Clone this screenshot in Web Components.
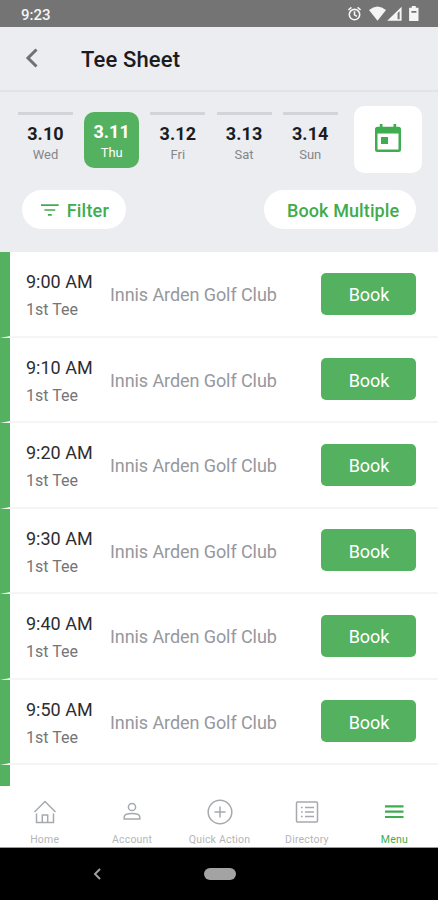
<!DOCTYPE html>
<html lang="en">
<head>
<meta charset="utf-8">
<meta name="viewport" content="width=device-width, initial-scale=1">
<title>Tee Sheet</title>
<style>
  body {
    margin: 0;
    font-family: Roboto, "Liberation Sans", sans-serif;
    --green: #54b15f;
    --green-text: #3fac4f;
    --panel: #ecedf1;
  }
</style>
</head>
<body>
<tee-app></tee-app>

<script>
const define = (name, render) => {
  customElements.define(name, class extends HTMLElement {
    constructor() {
      super();
      this.attachShadow({ mode: 'open' });
    }

    connectedCallback() {
      this.shadowRoot.innerHTML = render(this);
    }
  });
};

define('status-bar', () => `
  <style>
    :host {
      display: flex;
      align-items: center;
      height: 27px;
      box-sizing: border-box;
      padding: 2px 18px 0 21px;
      background: #747474;
      color: #f5f5f5;
      font-size: 15px;
      font-weight: 500;
    }
    svg { margin-left: auto; }
  </style>
  <span>9:23</span>
  <svg width="74" height="18" viewBox="346 6 74 18" fill="#f5f5f5">
    <g fill="none" stroke="#f5f5f5" stroke-width="1.600">
      <circle cx="354.5" cy="14.6" r="5.2"/>
      <path d="M354.5 11.3v3.6l2.4 1.5M348.4 10l3-2.6M357.6 7.4l3 2.6"/>
    </g>
    <path d="M369 10q8.500-7 17 0l-8.500 10.800z"/>
    <path fill-rule="evenodd" d="M387.200 20.800L401.600 6.800V20.800zM397.600 13v6.300h2V11.200z"/>
    <path fill-rule="evenodd" d="M411.800 6h4v1.700h2.700v13.200h-9.400V7.700h2.700zM411.400 11v1.800h5V11z"/>
  </svg>
`);

define('app-header', () => `
  <style>
    :host {
      display: flex;
      align-items: center;
      height: 65px;
      box-sizing: border-box;
      padding-left: 25px;
      background: var(--panel);
      border-bottom: 2px solid #e2e3e6;
    }
    svg { margin-top: -2px; }
    h1 {
      margin: 2px 0 0 42px;
      font-size: 22px;
      font-weight: 500;
      line-height: 26px;
      letter-spacing: .15px;
      color: #1c1c1e;
    }
  </style>
  <svg width="14" height="20" viewBox="0 0 14 20" fill="none" stroke="#707173" stroke-width="3">
    <path d="M11.500 1.500L3 10l8.500 8.500"/>
  </svg>
  <h1><slot></slot></h1>
`);

define('day-tab', el => `
  <style>
    :host {
      display: block;
      width: 55px;
      height: 56px;
      box-sizing: border-box;
      border-top: 3px solid #d2d4da;
      padding-top: 8px;
      text-align: center;
      color: #1b1c1e;
    }
    :host([selected]) {
      border-top: 0;
      border-radius: 10px;
      padding-top: 9px;
      background: var(--green);
      color: #fff;
    }
    b {
      display: block;
      font-size: 18px;
      font-weight: 700;
      line-height: 21px;
      letter-spacing: .1px;
    }
    span {
      display: block;
      font-size: 13px;
      line-height: 15px;
      margin-top: 3px;
      color: #858689;
    }
    :host([selected]) span { color: #fff; }
  </style>
  <b>${el.getAttribute('date')}</b>
  <span>${el.getAttribute('day')}</span>
`);

define('calendar-button', () => `
  <style>
    :host {
      display: flex;
      align-items: center;
      justify-content: center;
      width: 68px;
      height: 67px;
      border-radius: 10px;
      background: #fff;
    }
    svg { margin-top: -3px; }
  </style>
  <svg width="26" height="28" viewBox="0 0 26 28" fill="#3fac4f">
    <path fill-rule="evenodd" d="M4.800 0h2.700v2.700h11V0h2.700v2.700h2.300a2.500 2.500 0 0 1 2.500 2.500V25.500a2.500 2.500 0 0 1-2.500 2.500H2.500A2.500 2.500 0 0 1 0 25.500V5.200a2.500 2.500 0 0 1 2.500-2.500h2.300zM2.500 9.500v16h21v-16z"/>
    <rect x="6" y="13" width="7" height="7"/>
  </svg>
`);

define('pill-button', () => `
  <style>
    :host {
      display: flex;
      align-items: center;
      height: 39px;
      box-sizing: border-box;
      padding: 2px 17px 0 19px;
      border-radius: 20px;
      background: #fff;
      color: var(--green-text);
      font-size: 18px;
      font-weight: 500;
      white-space: nowrap;
    }
  </style>
  <slot name="icon"></slot>
  <slot></slot>
`);

define('date-panel', () => `
  <style>
    :host {
      display: block;
      height: 160px;
      box-sizing: border-box;
      padding: 14px 16px 0 18px;
      background: var(--panel);
    }
    .days {
      display: flex;
      align-items: flex-start;
      gap: 11.200px;
    }
    day-tab { margin-top: 6px; }
    calendar-button { margin-left: auto; }
    .actions {
      display: flex;
      justify-content: space-between;
      margin-top: 17px;
      padding: 0 6px 0 4px;
    }
    .filter { width: 104px; letter-spacing: .2px; }
    .filter svg { margin: -2px 8px 0 0; }
    .multiple { width: 152px; padding-left: 23px; letter-spacing: .1px; }
  </style>
  <div class="days">
    <day-tab date="3.10" day="Wed"></day-tab>
    <day-tab date="3.11" day="Thu" selected></day-tab>
    <day-tab date="3.12" day="Fri"></day-tab>
    <day-tab date="3.13" day="Sat"></day-tab>
    <day-tab date="3.14" day="Sun"></day-tab>
    <calendar-button></calendar-button>
  </div>
  <div class="actions">
    <pill-button class="filter">
      <svg slot="icon" width="18" height="12" viewBox="0 0 18 12" stroke="#3fac4f" stroke-width="1.700">
        <path d="M0 1h18M3.500 6h11M7 11h4"/>
      </svg>Filter</pill-button>
    <pill-button class="multiple">Book Multiple</pill-button>
  </div>
`);

define('tee-time', el => `
  <style>
    :host {
      display: flex;
      flex: none;
      align-items: center;
      height: 85.500px;
      box-sizing: border-box;
      padding: 0 22px 0 16px;
      border-left: 10px solid var(--green);
      border-bottom: 2px solid #f5f5f6;
      background: #fff;
    }
    .when { width: 84px; padding-top: 4px; white-space: nowrap; }
    .time {
      font-size: 18px;
      line-height: 22px;
      color: #2d2d30;
    }
    .tee {
      margin-top: 7px;
      font-size: 16px;
      line-height: 20px;
      color: #747578;
    }
    .club {
      flex: 1;
      padding-top: 2px;
      font-size: 18px;
      letter-spacing: -.08px;
      color: #96989d;
      white-space: nowrap;
    }
    button {
      width: 95px;
      height: 42px;
      padding: 2px 0 0 1px;
      border: 0;
      border-radius: 5px;
      background: var(--green);
      color: #fff;
      font: 400 18px Roboto, "Liberation Sans", sans-serif;
      letter-spacing: -.1px;
    }
  </style>
  <div class="when">
    <div class="time">${el.getAttribute('time')}</div>
    <div class="tee">1st Tee</div>
  </div>
  <div class="club"><slot></slot></div>
  <button>Book</button>
`);

define('tee-list', () => {
  const times = ['9:00 AM', '9:10 AM', '9:20 AM', '9:30 AM', '9:40 AM', '9:50 AM'];
  return `
  <style>
    :host {
      display: flex;
      flex-direction: column;
      height: 534px;
      overflow: hidden;
    }
    /* top of the next row, cut off by the tab bar */
    .rest { flex: 1; border-left: 10px solid var(--green); background: #fff; }
  </style>
  ${times.map(t => `<tee-time time="${t}">Innis Arden Golf Club</tee-time>`).join('')}
  <div class="rest"></div>`;
});

const icons = {
  home: '<path d="M3.500 14L14 3.500 24.500 14M5.500 15.500v9h17v-9M11.300 24v-7h5.400v7"/>',
  account: '<circle cx="14" cy="9" r="3.600"/><path d="M6.200 21v-2c0-2.300 4-3.500 7.800-3.500s7.800 1.200 7.800 3.500v2z"/>',
  plus: '<circle cx="14" cy="14" r="11.800"/><path d="M14 8.500v11M8.500 14h11"/>',
  directory: '<rect x="3.500" y="4" width="21" height="20" rx="1"/><path d="M8 9.500h1.700M12 9.500h9M8 14h1.700M12 14h9M8 18.500h1.700M12 18.500h9"/>',
  menu: '<path stroke-width="2.200" d="M5 8.400h18.500M5 13.700h18.500M5 19h18.500"/>'
};

define('tab-item', el => `
  <style>
    :host {
      display: flex;
      flex: 1;
      flex-direction: column;
      align-items: center;
      color: #a6a9ae;
      font-size: 10.500px;
      line-height: 12px;
      letter-spacing: .2px;
      white-space: nowrap;
    }
    :host([active]) { color: var(--green-text); }
    svg { display: block; margin-bottom: 8px; }
    span { color: #b4b6ba; }
    :host([active]) span { color: inherit; }
  </style>
  <svg width="28" height="28" viewBox="0 0 28 28" fill="none" stroke="currentColor" stroke-width="1.500">${icons[el.getAttribute('icon')]}</svg>
  <span><slot></slot></span>
`);

define('tab-bar', () => `
  <style>
    :host {
      display: flex;
      height: 62px;
      box-sizing: border-box;
      padding: 12px 0 0 1px;
      border-bottom: 1px solid #9b9b9b;
      background: #fff;
    }
  </style>
  <tab-item icon="home">Home</tab-item>
  <tab-item icon="account">Account</tab-item>
  <tab-item icon="plus">Quick Action</tab-item>
  <tab-item icon="directory">Directory</tab-item>
  <tab-item icon="menu" active>Menu</tab-item>
`);

define('system-nav', () => `
  <style>
    :host {
      display: flex;
      align-items: center;
      height: 52px;
      padding-left: 93px;
      background: #000;
    }
    .home {
      width: 32px;
      height: 12px;
      margin-left: 103px;
      border-radius: 6px;
      background: #a3a3a3;
    }
  </style>
  <svg width="8" height="12" viewBox="0 0 8 12" fill="none" stroke="#a0a0a0" stroke-width="2">
    <path d="M7 1L2 6l5 5"/>
  </svg>
  <div class="home"></div>
`);

define('tee-app', () => `
  <style>
    :host {
      display: flex;
      flex-direction: column;
      width: 438px;
      height: 900px;
      overflow: hidden;
      background: #fff;
    }
  </style>
  <status-bar></status-bar>
  <app-header>Tee Sheet</app-header>
  <date-panel></date-panel>
  <tee-list></tee-list>
  <tab-bar></tab-bar>
  <system-nav></system-nav>
`);
</script>
</body>
</html>
